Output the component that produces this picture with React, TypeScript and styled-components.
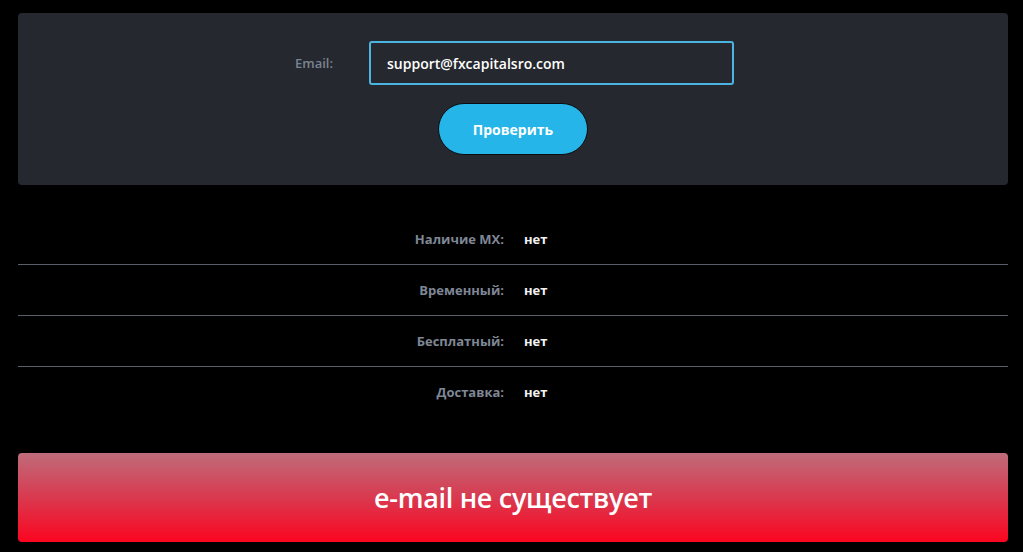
import React from "react";
import styled, { createGlobalStyle } from "styled-components";

const GlobalStyle = createGlobalStyle`
  html, body {
    margin: 0;
    padding: 0;
    background: #000;
    font-family: "Open Sans", "Noto Sans", Arial, sans-serif;
  }
`;

const Page = styled.div`
  padding: 13px 15px 0 18px;
  display: flex;
  flex-direction: column;
`;

const Panel = styled.form`
  background: #25282e;
  border-radius: 4px;
  height: 172px;
  box-sizing: border-box;
  padding-top: 28px;
  display: flex;
  flex-direction: column;
  align-items: center;
`;

const FieldRow = styled.div`
  display: flex;
  align-items: center;
  margin-left: 3px;
`;

const Label = styled.label`
  width: 74px;
  color: #7a8392;
  font-size: 13px;
  font-weight: 600;
`;

const Input = styled.input`
  width: 365px;
  height: 44px;
  box-sizing: border-box;
  background: #25282e;
  border: 2px solid #4bb4e0;
  border-radius: 3px;
  padding: 0 0 0 16px;
  color: #fff;
  font-family: inherit;
  font-size: 14px;
  font-weight: 600;
  outline: none;
`;

const CheckButton = styled.button`
  margin-top: 18px;
  width: 150px;
  height: 52px;
  border-radius: 26px;
  background: #25b5e8;
  border: 1px solid #0b0d10;
  color: #fff;
  font-family: inherit;
  font-size: 14px;
  font-weight: 700;
  cursor: pointer;
`;

const Results = styled.div`
  margin-top: 29px;
  display: flex;
  flex-direction: column;
`;

const ResultRow = styled.div<{ $last?: boolean }>`
  display: grid;
  grid-template-columns: 486px 1fr;
  column-gap: 20px;
  align-items: center;
  height: 50px;
  border-bottom: ${(p) => (p.$last ? "none" : "1px solid #5a5f6b")};
`;

const RowLabel = styled.span`
  text-align: right;
  color: #7f8796;
  font-size: 13px;
  font-weight: 700;
`;

const RowValue = styled.span`
  color: #f2f2f2;
  font-size: 13px;
  font-weight: 700;
`;

const Verdict = styled.div`
  margin-top: 36px;
  height: 89px;
  border-radius: 4px;
  background: linear-gradient(180deg, #bf6c7a 0%, #d9394f 50%, #fc0520 100%);
  display: flex;
  align-items: center;
  justify-content: center;
  color: #fff;
  font-size: 27px;
  font-weight: 600;
  letter-spacing: -0.3px;
`;

const rows = [
  { label: "Наличие MX:", value: "нет" },
  { label: "Временный:", value: "нет" },
  { label: "Бесплатный:", value: "нет" },
  { label: "Доставка:", value: "нет" },
];

export default function App() {
  return (
    <>
      <GlobalStyle />
      <Page>
        <Panel onSubmit={(e) => e.preventDefault()}>
          <FieldRow>
            <Label htmlFor="email">Email:</Label>
            <Input id="email" defaultValue="support@fxcapitalsro.com" />
          </FieldRow>
          <CheckButton type="submit">Проверить</CheckButton>
        </Panel>
        <Results>
          {rows.map((r, i) => (
            <ResultRow key={r.label} $last={i === rows.length - 1}>
              <RowLabel>{r.label}</RowLabel>
              <RowValue>{r.value}</RowValue>
            </ResultRow>
          ))}
        </Results>
        <Verdict>e-mail не существует</Verdict>
      </Page>
    </>
  );
}
